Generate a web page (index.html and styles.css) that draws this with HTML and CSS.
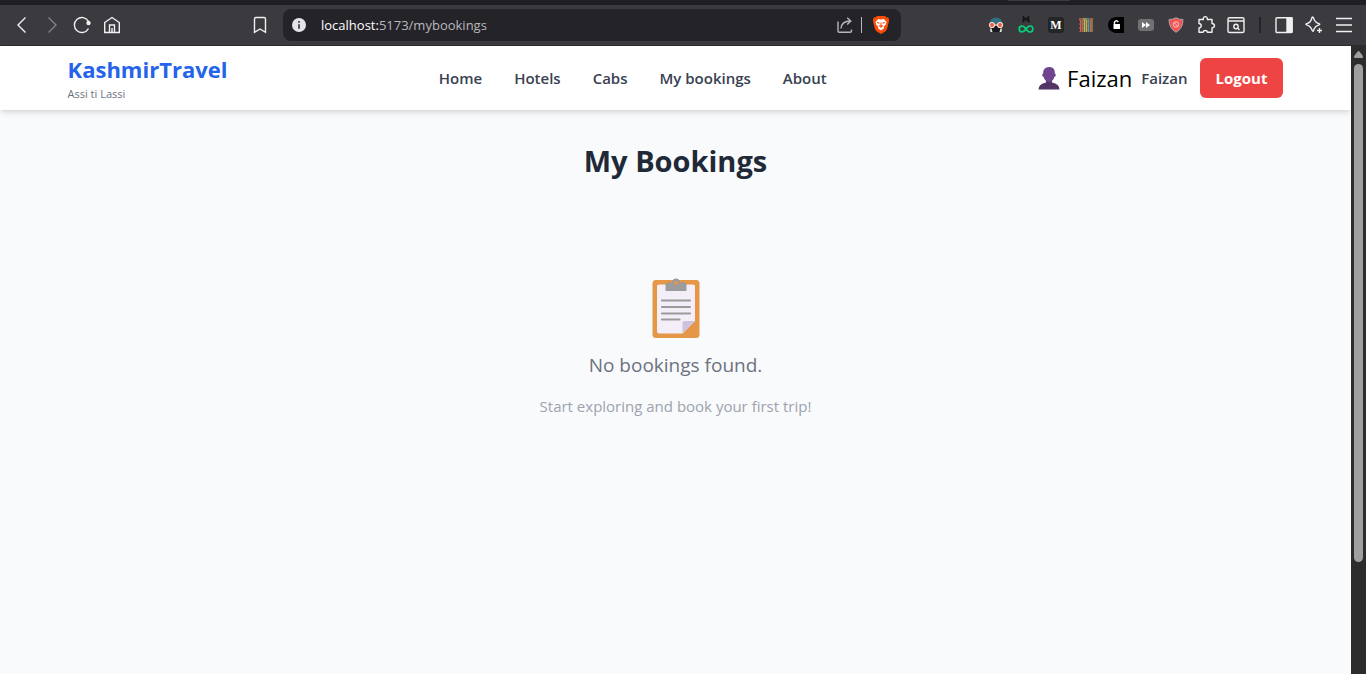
FILE: index.html
```html
<!DOCTYPE html>
<html lang="en">
<head>
<meta charset="utf-8">
<meta name="viewport" content="width=device-width, initial-scale=1">
<title>My Bookings</title>
<link rel="stylesheet" href="styles.css">
</head>
<body>
<div class="browser">
  <div class="tabstrip"><span class="tab-edge"></span></div>
  <div class="toolbar">
    <div class="group">
      <button class="tool" aria-label="Back"><svg width="20" height="20" viewBox="0 0 20 20"><path d="M13.500 2.500 6 10l7.500 7.500"/></svg></button>
      <button class="tool dim" aria-label="Forward"><svg width="20" height="20" viewBox="0 0 20 20"><path d="M6.500 2.500 14 10l-7.500 7.500"/></svg></button>
      <button class="tool" aria-label="Reload"><svg width="20" height="20" viewBox="0 0 20 20"><path d="M16.500 13.500A7.500 7.500 0 1 1 16.500 6.500"/><circle cx="16.500" cy="8" r="2.200" fill="#f0f0f2" stroke="none"/></svg></button>
      <button class="tool" aria-label="Home page"><svg width="20" height="20" viewBox="0 0 20 20"><path d="M2.700 7.500 10 2.500l7.300 5v10H2.700zM7.500 17.500V10h5v7.500M10 13v4.500"/></svg></button>
    </div>
    <button class="tool" aria-label="Bookmark"><svg width="20" height="20" viewBox="0 0 20 20"><path d="M4.500 4q0-1.500 1.500-1.500h8q1.500 0 1.500 1.500v13.300L10 14l-5.500 3.300z"/></svg></button>
    <div class="address">
      <svg class="info" width="14" height="14" viewBox="0 0 14 14"><circle cx="7" cy="7" r="7" fill="#e4e3e8"/><path d="M7 3v1.800M7 6.200v4.500" stroke="#55545b" stroke-width="2"/></svg>
      <span class="url"><span class="host">localhost:</span>5173/mybookings</span>
      <button class="mini" aria-label="Share"><svg width="18" height="18" viewBox="0 0 18 18"><path d="M2 5.500V15q0 1.200 1.200 1.200h11q1.300 0 1.300-1.200v-1.500M5 12.500C5.300 8 8 5 14.500 5M11.200 1.700 14.800 5l-3.600 3.500"/></svg></button>
      <span class="divider"></span>
      <button class="mini" aria-label="Brave Shields"><svg width="18" height="20" viewBox="0 0 18 20"><path fill="#fb4b08" stroke="none" d="m5 1h8l1.200 1.300 2.100.2.800 2.500-.3 2-1.800 7.200-1.700 2.300L9 19l-4.300-2.500L3 14.200 1.200 7l-.3-2 .8-2.500 2.100-.2z"/><path fill="#fff" stroke="none" d="m6.200 4 2.800.5 2.800-.5 2.700 3-.8 2.700-2 2 .4 1.500L9 15.500l-3.100-2.300.4-1.500-2-2L3.500 7z"/><path d="m5 7.500 2.400.6M13 7.500l-2.400.6M9 7.500V11M7.200 10.500 9 12l1.800-1.500" stroke="#fb4b08" stroke-width="1.100"/></svg></button>
    </div>
    <div class="group">
      <button class="tool" aria-label="Disguise extension"><svg width="16" height="16" viewBox="0 0 16 16"><g stroke="none"><path fill="#2f7180" d="M1.500 7Q2 .5 8 .5T14.500 7z"/><path fill="#12161b" d="M3 8h10v6H3z"/><path fill="#e2dfdc" d="M2 11.500h12l-.5 3.500h-11z"/><path fill="#18191c" d="M3.500 11h9l-1 4h-7z"/></g><circle cx="4" cy="8" r="2.500" fill="#e55b49" stroke="#f7dccb" stroke-width="1.200"/><circle cx="12" cy="8" r="2.500" fill="#e55b49" stroke="#f7dccb" stroke-width="1.200"/><path d="M6.700 8h2.600" stroke="#f7dccb"/></svg></button>
      <button class="tool" aria-label="Medium unlimited"><svg width="16" height="18" viewBox="0 0 16 18"><path d="M5.500 5.500V1L8 4l2.500-3v4.500M4.500 5.500h2M9.500 5.500h2.500" stroke="#131316" stroke-width="1.500"/><path d="M8 13C5.500 9 1.200 9.500 1.200 13S5.500 17 8 13s6.800-4 6.800 0S10.500 17 8 13z" stroke="#08ce78" stroke-width="1.700"/></svg></button>
      <button class="tool" aria-label="Medium reader"><span class="m-icon">M</span></button>
      <button class="tool" aria-label="Colour threads"><svg width="14" height="14" viewBox="0 0 14 14"><g stroke-width="1.300"><path d="M1 0v2l1 2-1 2 1 2-1 2 1 2-1 2" stroke="#e8635a"/><path d="M3 0v2l1 2-1 2 1 2-1 2 1 2-1 2" stroke="#bb7359"/><path d="M5 0v2l1 2-1 2 1 2-1 2 1 2-1 2" stroke="#c9c956"/><path d="M7 0v2l1 2-1 2 1 2-1 2 1 2-1 2" stroke="#d3b65a"/><path d="M9 0v2l1 2-1 2 1 2-1 2 1 2-1 2" stroke="#59a7ae"/><path d="M11 0v2l1 2-1 2 1 2-1 2 1 2-1 2" stroke="#c76a5e"/><path d="M13 0v14" stroke="#b68b4f"/></g></svg></button>
      <button class="tool" aria-label="Unlock extension"><svg width="16" height="16" viewBox="0 0 16 16"><path fill="#000" stroke="none" d="M7 0h9v16H7Q0 14 0 8t7-8z"/><path fill="#fff" stroke="none" d="M5.500 7h6.500v5H5.500z"/><path d="M6.500 7V5Q8.500 2.500 10.300 5" stroke="#fff"/></svg></button>
      <button class="tool" aria-label="Fast forward"><svg width="16" height="16" viewBox="0 0 16 16"><rect y="2" width="16" height="12" rx="3" fill="#717174" stroke="none"/><path fill="#fff" stroke="none" d="m4 5 4 3-4 3zM8 5l4 3-4 3z"/></svg></button>
      <button class="tool" aria-label="Ad blocker"><svg width="16" height="16" viewBox="0 0 16 16"><path fill="#ef5555" stroke="#a9a3a8" stroke-width="1" d="M8 .7q3 2 7 1.800Q15 11.500 8 15.300 1 11.500 1 2.500q4 .2 7-1.800z"/><circle cx="8" cy="7.500" r="2.700" stroke="#ffc4c4" stroke-width="1"/><path d="m6.200 5.700 3.600 3.600" stroke="#ffc4c4" stroke-width="1"/></svg></button>
      <button class="tool" aria-label="Extensions"><svg width="20" height="20" viewBox="0 0 20 20"><path stroke-linejoin="round" d="M3 4.500h4.300C6.500.7 12 .7 11.300 4.500H16V8.500c3.300.5 3.300 4 0 4.500v4.300H11.500c-.5-2.500-4-2.500-4.500 0H3V13c3-.5 3-4 0-4.500z"/></svg></button>
      <button class="tool" aria-label="Search tabs"><svg width="20" height="20" viewBox="0 0 20 20"><rect x="2" y="2.700" width="16" height="14.800" rx="1.500"/><path d="M2 6h16M11.500 13l2 2"/><circle cx="10" cy="11.500" r="2.200"/></svg></button>
      <span class="bar-gap"></span>
      <button class="tool" aria-label="Sidebar"><svg width="20" height="20" viewBox="0 0 20 20"><rect x="2" y="2.700" width="16" height="14.800" rx="1"/><path fill="#f0f0f2" d="M13 3h5v14h-5z"/></svg></button>
      <button class="tool" aria-label="Leo AI"><svg width="20" height="20" viewBox="0 0 20 20"><path d="M8.500 2q.8 0 1.100 1.200Q10.700 7.500 15 8.700q1.500.5 0 1.100-4.300 1.500-5.400 5.500-.5 2-1.500 0Q7 11.300 2.700 9.800q-1.500-.6 0-1.100Q7 7.500 7.800 3.200 8 2 8.500 2zM15.500 13v5M13 15.500h5"/></svg></button>
      <button class="tool" aria-label="Menu"><svg width="20" height="20" viewBox="0 0 20 20"><path d="M2 3.500h16M2 10h16M2 16.500h16"/></svg></button>
    </div>
  </div>
</div>
<div class="viewport">
  <div class="page">
    <header class="site-header">
      <div class="brand"><a class="brand-name" href="#">KashmirTravel</a><span class="tagline">Assi ti Lassi</span></div>
      <nav class="nav"><a href="#">Home</a><a href="#">Hotels</a><a href="#">Cabs</a><a href="#">My bookings</a><a href="#">About</a></nav>
      <div class="account">
        <svg class="avatar" width="22" height="24" viewBox="0 0 22 24"><path fill="#533565" d="M.5 23.500Q.5 18 8 16.500h6q7.500 1.500 7.500 7z"/><path fill="#533565" d="M8 13h6v4q-3 2-6 0z"/><path fill="#6f4590" d="M11 1c4 0 6 2 5.800 6.500q1.200 0 1 1.500-.2 2-1.500 2-1 4.500-5.300 5-4.300-.5-5.300-5-1.300 0-1.500-2-.2-1.500 1-1.500Q5 1 11 1z"/></svg>
        <span class="user-large">Faizan</span>
        <span class="user-small">Faizan</span>
        <button class="logout">Logout</button>
      </div>
    </header>
    <main class="bookings">
      <h1>My Bookings</h1>
      <section class="empty">
        <svg class="clipboard" width="48" height="60" viewBox="0 0 48 60"><rect x=".5" y="2" width="47" height="58" rx="3.500" fill="#e39747"/><path fill="#f3eef8" d="M7 6.500h34q2 0 2 2V43L30.500 55.500H7q-2 0-2-2v-45q0-2 2-2z"/><path fill="#cdc3dc" d="M43 43H32.500q-2 0-2 2v10.500z"/><path fill="#9b9b9b" d="M13.500 13V7q0-2.500 2.500-2.500h4Q20.500.5 24 .5t4 4h4q2.500 0 2.500 2.500v6z"/><circle cx="24" cy="5" r="1.900" fill="#e39747"/><path d="M10 22.500h28M10 29h28M10 35.500h28M10 41.500h17.500" stroke="#9b9b9b" stroke-width="2.200" stroke-linecap="round"/></svg>
        <p class="empty-title">No bookings found.</p>
        <p class="empty-hint">Start exploring and book your first trip!</p>
      </section>
    </main>
  </div>
  <div class="scrollbar"><svg width="9" height="7" viewBox="0 0 9 7"><path d="M4.500 0Q5.500 0 9 5.500 9 7 8 7H1Q0 7 0 5.500 3.500 0 4.500 0z" fill="#9f9f9f"/></svg><div class="thumb"></div></div>
</div>
</body>
</html>
```
FILE: styles.css
```css
* { box-sizing: border-box; }
body { margin: 0; height: 100vh; display: flex; flex-direction: column; overflow: hidden; font-family: "Open Sans", "Noto Sans", sans-serif; background: #f9fafb; }
button { font: inherit; border: 0; padding: 0; background: none; cursor: pointer; }
a { color: inherit; text-decoration: none; }
h1, p { margin: 0; }
svg { display: block; flex: none; }

.browser { flex: none; background: #3b3a3f; border-bottom: 1px solid #2c2b30; }
.tabstrip { height: 5px; background: #1f1e23; display: flex; justify-content: flex-end; align-items: flex-start; padding-right: 296px; }
.tab-edge { width: 62px; height: 1px; background: #3b3a3f; }
.toolbar { height: 40px; padding: 0 7px; display: flex; align-items: center; }
.group { display: flex; align-items: center; }
.group:first-child { margin-right: 118px; }
.tool { width: 30px; height: 30px; display: flex; align-items: center; justify-content: center; }
.tool svg, .mini svg { fill: none; stroke: #f0f0f2; stroke-width: 1.4; }
.tool.dim svg { stroke: #828187; }
.address { flex: 1; height: 32px; margin: 0 80px 0 8px; padding: 0 11px 0 9px; display: flex; align-items: center; background: #242328; border-radius: 8px; }
.url { flex: 1; margin-left: 15px; font-size: 13px; color: #b9b8be; white-space: nowrap; }
.host { color: #fff; }
.mini svg { stroke: #b7b6bc; }
.divider { width: 1px; height: 16px; margin: 0 10px 0 7px; background: #b7b6bc; }
.m-icon { width: 16px; height: 16px; background: #242526; border-radius: 3px; color: #fff; font: bold 12px/16px "Liberation Serif", serif; }
.bar-gap { width: 2px; height: 16px; margin: 0 8px; background: #242328; }

.viewport { flex: 1; display: flex; min-height: 0; }
.page { flex: 1; min-width: 0; }
.site-header { height: 64px; padding: 0 5%; display: flex; align-items: center; justify-content: space-between; background: #fff; box-shadow: 0 4px 6px -1px rgba(0,0,0,.1), 0 2px 4px -2px rgba(0,0,0,.1); }
.brand { display: flex; flex-direction: column; }
.brand-name { font-size: 22px; line-height: 32px; font-weight: 700; color: #2563eb; }
.tagline { font-size: 11px; line-height: 18px; color: #6b7280; }
.nav { display: flex; gap: 32px; font-size: 15px; font-weight: 600; color: #374151; }
.account { display: flex; align-items: center; }
.user-large { margin: 0 9px 0 7px; font-size: 22px; color: #000; }
.user-small { margin-right: 12px; font-size: 15px; font-weight: 600; color: #374151; }
.logout { height: 40px; padding: 0 16px; font-size: 15px; font-weight: 700; color: #fff; background: #ef4444; border-radius: 6px; }

.bookings { padding: 31px 24px; text-align: center; }
h1 { font-size: 29px; line-height: 40px; font-weight: 700; color: #1f2937; }
.empty { padding-top: 97px; display: flex; flex-direction: column; align-items: center; }
.empty-title { margin-top: 12px; font-size: 19px; line-height: 30px; color: #6b7280; }
.empty-hint { margin-top: 14px; font-size: 15px; line-height: 24px; color: #9ca3af; }

.scrollbar { flex: none; width: 15px; padding-top: 5px; display: flex; flex-direction: column; align-items: center; gap: 6px; background: #2c2c2c; }
.thumb { width: 9px; height: 80%; border-radius: 5px; background: #9f9f9f; }
```
